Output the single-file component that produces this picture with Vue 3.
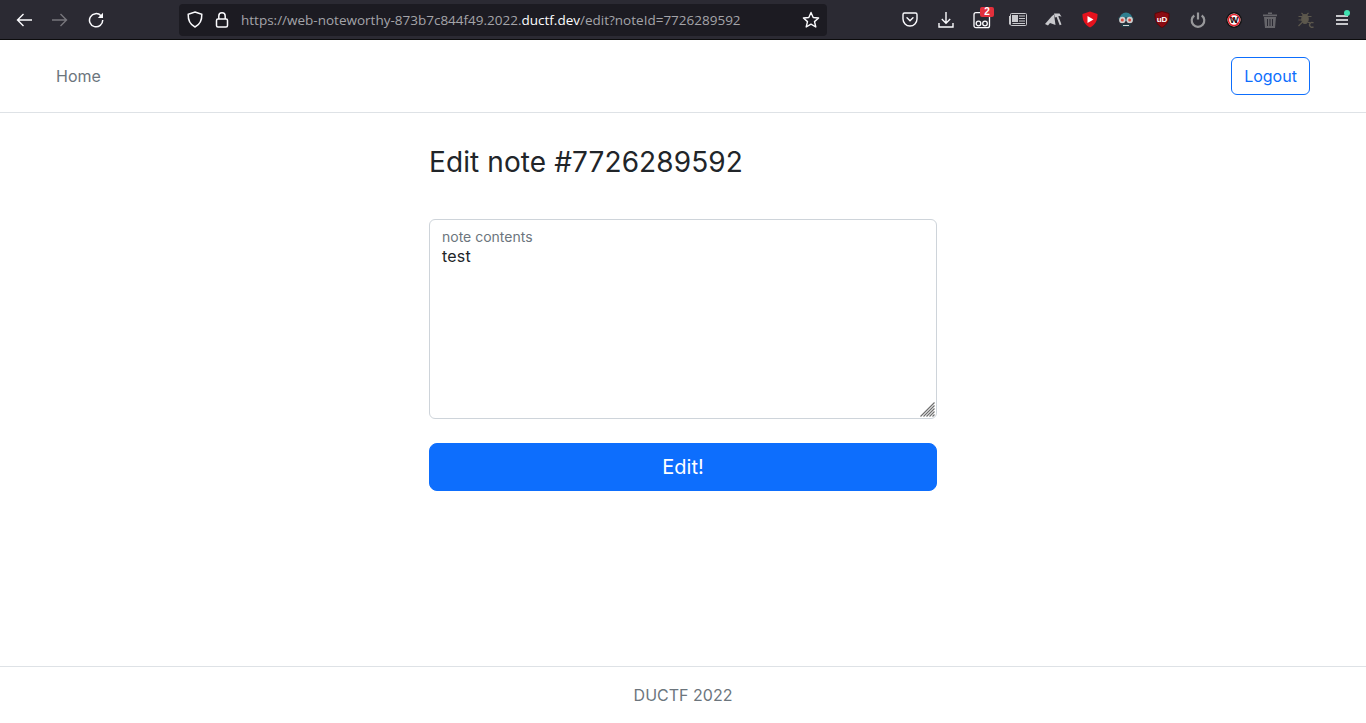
<script setup>
const contents = 'test'
</script>

<template>
  <div class="page">
    <header class="chrome">
      <div class="nav-buttons">
        <span class="tool"><svg width="16" height="14" viewBox="0 0 16 14" fill="none" stroke="#fbfbfe" stroke-width="1.400"><path d="M1.500 7H16M7.500 1 1.500 7l6 6"/></svg></span>
        <span class="tool"><svg width="16" height="14" viewBox="0 0 16 14" fill="none" stroke="#77767c" stroke-width="1.400"><path d="M0 7h14.500M8.500 1l6 6-6 6"/></svg></span>
        <span class="tool"><svg width="16" height="16" viewBox="0 0 16 16" fill="none" stroke="#fbfbfe" stroke-width="1.500"><path d="M13 3.800A6.600 6.600 0 1 0 14.700 8"/><path d="M15 .8V6H9.800Z" fill="#fbfbfe" stroke="none"/></svg></span>
      </div>
      <div class="urlbar">
        <svg class="shield" width="16" height="17" viewBox="0 0 16 17" fill="none" stroke="#fbfbfe" stroke-width="1.500"><path d="M8 1 14.800 3.200C15 9 13 13.500 8 16 3 13.500 1 9 1.200 3.200Z"/></svg>
        <svg class="lock" width="14" height="16" viewBox="0 0 14 16" fill="none" stroke="#fbfbfe" stroke-width="1.500"><path d="M3.800 7V4a3.200 3.200 0 0 1 6.400 0v3"/><rect x="1.500" y="7" width="11" height="8" rx="1.500"/></svg>
        <span class="url">https://web-noteworthy-873b7c844f49.2022.<b>ductf.dev</b>/edit?noteId=7726289592</span>
        <svg class="star" width="18" height="18" viewBox="0 0 18 18" fill="none" stroke="#fbfbfe" stroke-width="1.400" stroke-linejoin="round"><path d="M9 1.500 11.200 6.500 16.600 7 12.500 10.600 13.800 16 9 13.100 4.200 16 5.500 10.600 1.400 7 6.800 6.500Z"/></svg>
      </div>
      <div class="extensions">
        <span class="tool"><svg width="16" height="15" viewBox="0 0 16 15" fill="none" stroke="#fbfbfe" stroke-width="1.400"><path d="M2.500 1h11A1.500 1.500 0 0 1 15 2.500V7A7 7 0 0 1 1 7V2.500A1.500 1.500 0 0 1 2.500 1Z"/><path d="m5 5.800 3 3 3-3" stroke-linecap="round"/></svg></span>
        <span class="tool"><svg width="16" height="16" viewBox="0 0 16 16" fill="none" stroke="#fbfbfe" stroke-width="1.400"><path d="M8 0v11M3.800 7 8 11.200 12.200 7M1 11v4h14v-4"/></svg></span>
        <span class="tool"><svg width="18" height="18" viewBox="0 0 18 18" fill="none" stroke="#fbfbfe" stroke-width="1.300"><rect x="1" y="1.700" width="15.500" height="15" rx="2"/><circle cx="5.500" cy="12.500" r="2.300"/><circle cx="12" cy="12.500" r="2.300"/></svg><span class="badge">2</span></span>
        <span class="tool"><svg width="18" height="13" viewBox="0 0 18 13" fill="none" stroke="#c9c9cd" stroke-width="1"><rect x="1.500" y=".5" width="16" height="12" rx="1"/><path d="M.5 3v8.500"/><rect x="3.500" y="2.500" width="5" height="6" fill="#c9c9cd"/><path d="M10 3h6M10 5.500h6M10 8h6M3.500 10.500H16"/></svg></span>
        <span class="tool"><svg width="18" height="13" viewBox="0 0 18 13" fill="#c9c9cd"><path d="M0 11 7 3 9 1.500 10.500 12 5 10 3 12.500Z"/><path d="M9 .5h5.500l2 3.200-2-.7-1.200.3 3.200 8.200-1.800.7L11.600 4 9.800 4.500Z"/></svg></span>
        <span class="tool"><svg width="16" height="17" viewBox="0 0 16 17"><path d="M8 .5 15.500 3C15.800 9.500 13 14 8 16.500 3 14 .2 9.500.5 3Z" fill="#e5121d"/><path d="M5.500 5 11.500 8.500 5.500 12Z" fill="#fff"/></svg></span>
        <span class="tool"><svg width="18" height="17" viewBox="0 0 18 17"><path d="M2.500 8a6.500 6.500 0 0 1 13 0v2h-13Z" fill="#2f7f90"/><path d="M1 6.500h16v2H1Z" fill="#20414a"/><circle cx="5.300" cy="9" r="3.200" fill="#cfcfcf"/><circle cx="12.700" cy="9" r="3.200" fill="#cfcfcf"/><circle cx="5.300" cy="9" r="1.500" fill="#d64a3e"/><circle cx="12.700" cy="9" r="1.500" fill="#d64a3e"/><path d="M4.500 12.500h9V16h-9Z" fill="#1e3d46"/><path d="M6 14.500h6" stroke="#d5d5d5"/></svg></span>
        <span class="tool"><svg width="16" height="17" viewBox="0 0 16 17"><path d="M8 .5 15 2.500C15.300 9.500 13 14 8 16.500 3 14 .7 9.500 1 2.500Z" fill="#8a0c12" stroke="#5a0000" stroke-width=".8"/><text x="8" y="10.800" text-anchor="middle" class="ub">uD</text></svg></span>
        <span class="tool"><svg width="16" height="16" viewBox="0 0 16 16" fill="none" stroke="#98989b" stroke-width="2.200"><path d="M4.300 3.500a6.300 6.300 0 1 0 7.400 0M8 .5v7"/></svg></span>
        <span class="tool"><svg width="16" height="16" viewBox="0 0 16 16"><circle cx="8" cy="8" r="7.200" fill="#fff" stroke="#111" stroke-width="1.400"/><circle cx="8" cy="8" r="5.600" fill="none" stroke="#e2202c" stroke-width="1.500"/><path d="m4 4 8 8" stroke="#e2202c" stroke-width="1.300"/><text x="8" y="11" text-anchor="middle" class="w">W</text></svg></span>
        <span class="tool"><svg width="14" height="16" viewBox="0 0 14 16" fill="#66656a"><path d="M0 2.500h14V4.300H0ZM5 .5h4V2H5Z"/><path d="M1 5h12l-1 11H2ZM4 7v7h1V7Zm2.500 0v7h1V7ZM9 7v7h1V7Z" fill-rule="evenodd"/></svg></span>
        <span class="tool"><svg width="16" height="16" viewBox="0 0 16 16" fill="none" stroke="#5d584d" stroke-width="1.200"><ellipse cx="7" cy="7" rx="3.200" ry="4.500" fill="#5d584d"/><path d="M3.500 .8 6 3.500M10.500.8 8 3.500M.5 4.500H4M13.500 4.500H10M.5 8H4M.5 14 4.500 10M10 10.500h2"/><path d="M15.500 11a2.400 2.400 0 1 0 0 3.800" stroke-width="1.400"/></svg></span>
        <span class="tool menu"><svg width="14" height="12" viewBox="0 0 14 12" stroke="#fbfbfe" stroke-width="1.500"><path d="M1 2h12M1 6h12M1 10h12"/></svg><span class="dot"></span></span>
      </div>
    </header>

    <nav class="navbar">
      <a class="home">Home</a>
      <button class="logout" type="button">Logout</button>
    </nav>

    <main class="content">
      <h1 class="title">Edit note #7726289592</h1>
      <form class="note-form" @submit.prevent>
        <div class="field">
          <textarea class="note" :value="contents"></textarea>
          <label class="float-label">note contents</label>
          <svg class="grip" width="15" height="15" viewBox="0 0 15 15" fill="none" stroke="#6f6f6f" stroke-width="1.200"><path d="M.5 14.500 14.500.5M3.500 14.500l11-11M6.500 14.500l8-8M9.500 14.500l5-5M12.500 14.500l2-2"/></svg>
        </div>
        <button class="submit" type="submit">Edit!</button>
      </form>
    </main>

    <footer class="footer">DUCTF 2022</footer>
  </div>
</template>

<style>
html, body { margin: 0; background: #fff; overflow: hidden; }
</style>

<style scoped>
.page {
  height: 723px;
  display: flex;
  flex-direction: column;
  font-family: Inter, "Liberation Sans", sans-serif;
  color: #212529;
}
.chrome {
  height: 39px;
  flex: none;
  display: flex;
  align-items: center;
  background: #2b2a33;
  border-bottom: 1px solid #0c0c0d;
}
.nav-buttons { display: flex; margin-left: 6px; }
.tool {
  position: relative;
  width: 36px;
  height: 36px;
  display: flex;
  align-items: center;
  justify-content: center;
}
.urlbar {
  margin-left: 65px;
  width: 648px;
  height: 32px;
  box-sizing: border-box;
  display: flex;
  align-items: center;
  padding: 0 7px 0 8px;
  background: #1c1b22;
  border-radius: 4px;
}
.shield { margin-right: 12px; }
.lock { margin-right: 12px; }
.url {
  flex: 1;
  font-family: "Open Sans", sans-serif;
  font-size: 13.5px;
  color: #a4a4a9;
  white-space: nowrap;
}
.url b { font-weight: 400; color: #fbfbfe; }
.extensions { display: flex; margin-left: 65px; }
.badge {
  position: absolute;
  left: 16px;
  top: 5px;
  width: 14px;
  height: 10px;
  background: #e3303c;
  border-radius: 2px;
  color: #fff;
  font: 700 10px/10px "Liberation Sans", sans-serif;
  text-align: center;
}
.dot {
  position: absolute;
  left: 20px;
  top: 8px;
  width: 6px;
  height: 6px;
  border-radius: 50%;
  background: #3fe1b0;
}
.navbar {
  height: 72px;
  flex: none;
  display: flex;
  align-items: center;
  justify-content: space-between;
  padding: 0 56px;
  border-bottom: 1px solid #dee2e6;
}
.home { font-size: 16px; color: #6c757d; }
.logout {
  width: 79px;
  height: 38px;
  padding: 0;
  background: #fff;
  border: 1px solid #0d6efd;
  border-radius: 6px;
  color: #0d6efd;
  font: 400 16px Inter, sans-serif;
}
.content {
  flex: 1;
  width: 508px;
  margin: 0 auto;
}
.title {
  margin: 32px 0 40px;
  font-size: 28px;
  font-weight: 400;
  line-height: 34px;
  letter-spacing: .1px;
}
.note-form { display: flex; flex-direction: column; gap: 24px; }
.field { position: relative; height: 200px; }
.note {
  display: block;
  width: 100%;
  height: 200px;
  box-sizing: border-box;
  padding: 24px 12px 8px;
  border: 1px solid #ced4da;
  border-radius: 6px;
  color: #212529;
  font: 400 16px/24px Inter, sans-serif;
  letter-spacing: .2px;
  outline: none;
  resize: none;
}
.float-label {
  position: absolute;
  left: 13px;
  top: 9px;
  font-size: 14px;
  line-height: 18px;
  color: #6c757d;
}
.grip {
  position: absolute;
  right: 2px;
  bottom: 2px;
  pointer-events: none;
}
.submit {
  height: 48px;
  padding: 0;
  border: 1px solid #0d6efd;
  border-radius: 8px;
  background: #0d6efd;
  color: #fff;
  font: 400 20px Inter, sans-serif;
}
.footer {
  height: 56px;
  flex: none;
  display: flex;
  align-items: center;
  justify-content: center;
  border-top: 1px solid #dee2e6;
  font-size: 16px;
  color: #6c757d;
}
.w { font: 700 9px "Liberation Sans", sans-serif; fill: #111; }
.ub { font: 700 8px "Liberation Sans", sans-serif; fill: #fff; }
</style>
